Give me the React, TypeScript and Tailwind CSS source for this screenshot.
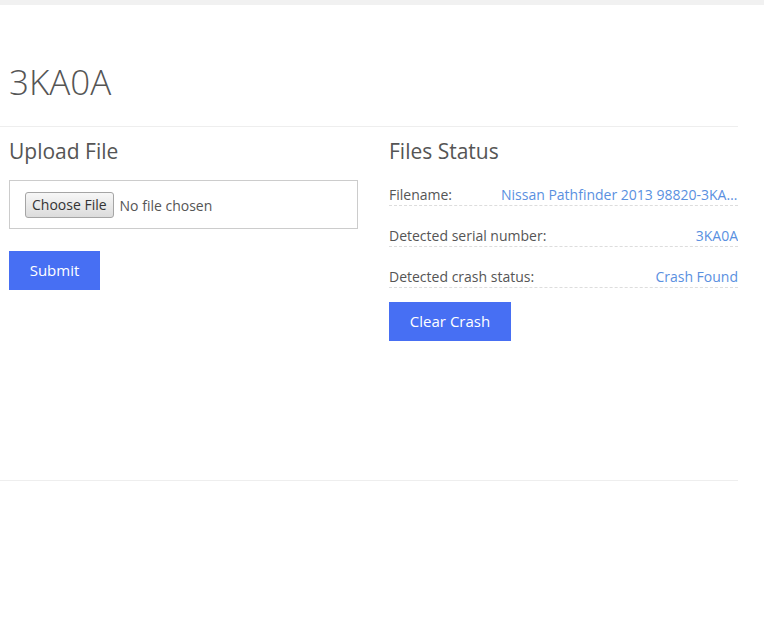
import React from 'react';

const rows = [
  { label: 'Filename:', value: 'Nissan Pathfinder 2013 98820-3KA0A.bin' },
  { label: 'Detected serial number:', value: '3KA0A' },
  { label: 'Detected crash status:', value: 'Crash Found' },
];

export default function App() {
  return (
    <div className="min-h-screen bg-white text-[#555] font-['Open_Sans',sans-serif]">
      <div className="h-[5px] bg-[#f1f1f1]" />
      <div className="w-[738px]">
        <div className="pt-[57px] pb-[24px] pl-[9px] border-b border-[#eee]">
          <h1 className="text-[35px] leading-[40px] font-light">3KA0A</h1>
        </div>

        <div className="flex gap-[31px] pl-[9px] pt-[12px] pb-[139px] border-b border-[#eee]">
          <div className="w-[349px]">
            <h2 className="text-[21px] leading-[25px]">Upload File</h2>
            <div className="mt-[16px] border border-[#ccc] h-[49px] flex items-center px-[15px]">
              <input
                type="file"
                className="text-[14px] text-[#555] font-['Open_Sans',sans-serif] file:mr-[6px] file:h-[26px] file:px-[6px] file:border file:border-[#a5a5a5] file:rounded-[3px] file:bg-gradient-to-b file:from-[#f7f7f7] file:to-[#dcdcdc] file:text-[#333] file:text-[14px] file:font-['Open_Sans',sans-serif]"
              />
            </div>
            <button className="mt-[22px] w-[91px] h-[39px] bg-[#476ff3] text-white text-[15px]">
              Submit
            </button>
          </div>

          <div className="w-[349px]">
            <h2 className="text-[21px] leading-[25px]">Files Status</h2>
            <div className="mt-[21px] flex flex-col gap-[20px]">
              {rows.map((r) => (
                <div
                  key={r.label}
                  className="flex justify-between gap-4 border-b border-dashed border-[#ddd] text-[14px] leading-[20px]"
                >
                  <span className="shrink-0">{r.label}</span>
                  <span className="text-[#5a90df] truncate max-w-[237px]">{r.value}</span>
                </div>
              ))}
            </div>
            <button className="mt-[14px] w-[122px] h-[39px] bg-[#476ff3] text-white text-[15px]">
              Clear Crash
            </button>
          </div>
        </div>
      </div>
    </div>
  );
}
